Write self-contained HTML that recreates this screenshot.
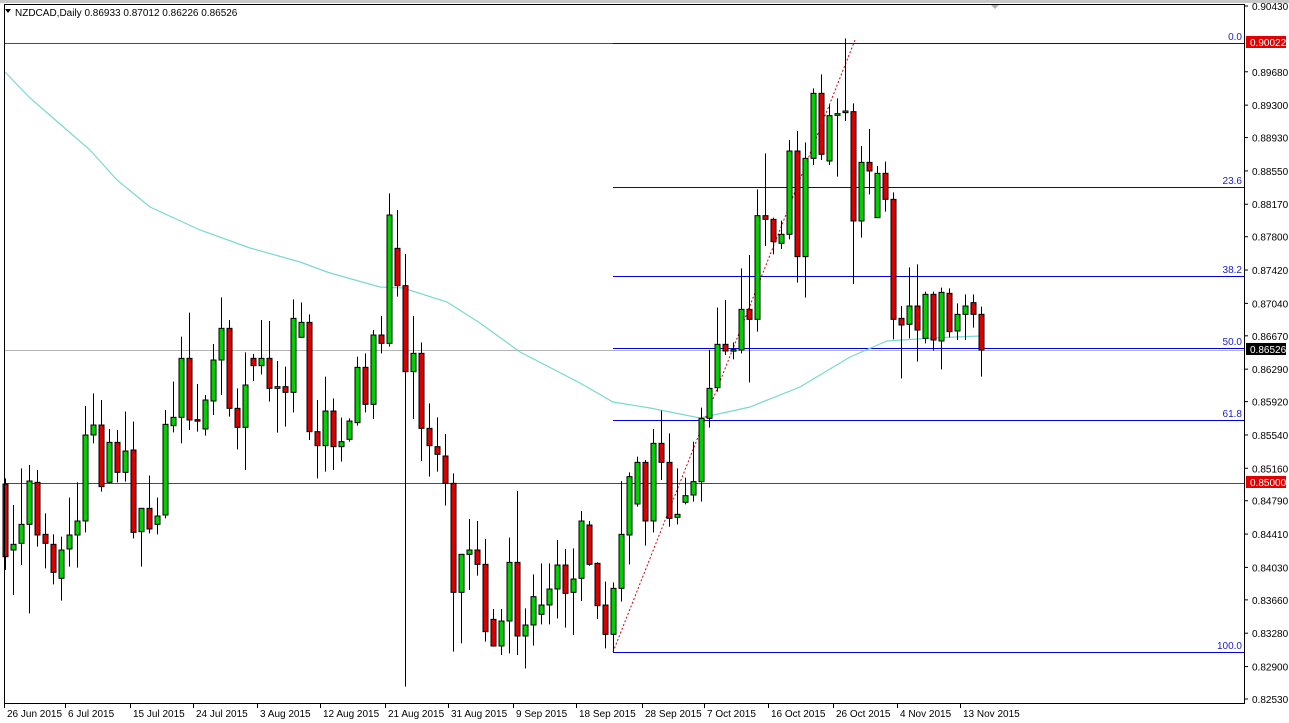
<!DOCTYPE html>
<html><head><meta charset="utf-8"><style>
html,body{margin:0;padding:0;background:#fff;}
body{width:1289px;height:723px;overflow:hidden;position:relative;font-family:"Liberation Sans",sans-serif;}
svg{position:absolute;left:0;top:0;}
text{font-family:"Liberation Sans",sans-serif;font-size:10px;}
</style></head><body>
<svg id="s" width="1289" height="723" xmlns="http://www.w3.org/2000/svg">
<rect x="0" y="0" width="1289" height="723" fill="#fff"/>
<g id="grid"></g>
<g id="cand"></g>
<g id="ax"></g>
</svg>
<script>
var NS="http://www.w3.org/2000/svg";
function el(parent,tag,attrs,txt){var e=document.createElementNS(NS,tag);for(var k in attrs)e.setAttribute(k,attrs[k]);if(txt!==undefined)e.textContent=txt;document.getElementById(parent).appendChild(e);return e;}
el('grid','rect',{x:5,y:43,width:608,height:1,fill:'#ff0000'});
el('grid','rect',{x:5,y:350,width:1239,height:1,fill:'#b4b4b4'});
el('grid','rect',{x:5,y:483,width:1239,height:1,fill:'#ff0000'});
var fib=[[43,'0.0'],[187,'23.6'],[276,'38.2'],[348,'50.0'],[420,'61.8'],[652,'100.0']];
fib.forEach(function(f){el('grid','rect',{x:613,y:f[0],width:631,height:1,fill:'#0000e0'});
el('grid','text',{x:1242,y:f[0]-3,'text-anchor':'end',fill:'#2020c0'},f[1]);});
var ma=[[5,72],[30,98],[60,124],[90,150],[117,180],[150,207],[200,230],[250,248],[300,262],[330,273],[380,287],[403,288],[447,302],[480,323],[520,352],[580,383],[613,402],[650,408],[700,418],[750,407],[800,387],[850,357],[887,341],[933,338],[980,336]];
el('grid','polyline',{points:ma.map(function(p){return p.join(',')}).join(' '),fill:'none',stroke:'#7ad8d0','stroke-width':1.2});
el('grid','line',{x1:613,y1:652,x2:855,y2:40,stroke:'#d00000','stroke-width':1,'stroke-dasharray':'2,2'});
var z1=[[895,912,1130,1170,'r'],[975,1093,1110,1245,'g'],[865,1033,1090,1155,'g'],[855,903,1033,1300,'g'],[870,907,1065,1100,'r'],[1000,1063,1090,1165,'r'],[1063,1093,1177,1213,'r'],[1070,1110,1195,1262,'g'],[953,1065,1107,1160,'g'],[907,1023,1065,1163,'g'],[678,765,1023,1057,'g'],[640,735,765,790,'g'],[660,735,920,935,'r'],[747,787,907,910,'g'],[750,787,877,907,'r'],[695,813,877,905,'g'],[725,810,1057,1075,'r'],[985,985,1055,1160,'g'],[887,985,1047,1060,'r'],[953,1008,1033,1063,'g'],[690,733,1005,1015,'g'],[605,712,737,757,'g'],[470,535,712,790,'g'],[398,535,720,750,'r'],[612,719,722,755,'r'],[645,660,747,767,'g'],[492,540,663,705,'g'],[352,445,540,645,'g'],[420,445,685,710,'r'],[625,685,742,808,'r'],[517,615,742,870,'g'],[522,535,557,603,'r'],[420,535,557,583,'g'],[423,535,625,665,'r'],[543,620,625,758,'g'],[560,620,637,740,'r'],[358,415,637,697,'g'],[367,427,472,472,'g'],[403,427,755,780,'r'],[660,755,797,895,'r']];
var z2=[[590,693,797,875,'g'],[655,693,800,870,'r'],[713,785,800,845,'g'],[715,723,778,785,'g'],[530,562,728,737,'g'],[520,562,673,697,'r'],[450,465,673,717,'g'],[408,465,490,520,'r'],[40,105,490,500,'g'],[90,205,317,350,'r'],[222,317,575,1520,'r'],[408,520,575,717,'g'],[487,520,745,843,'r'],[670,745,797,890,'r'],[712,800,823,875,'r'],[762,828,910,977,'r'],[880,910,1237,1415,'r'],[1123,1123,1237,1390,'g'],[1017,1110,1123,1230,'g'],[1023,1110,1153,1187,'r'],[1077,1153,1355,1385,'r'],[1287,1318,1398,1400,'r'],[1287,1323,1398,1425,'g'],[1073,1147,1323,1420,'g'],[933,1147,1368,1425,'r'],[1285,1335,1368,1465,'g'],[1183,1250,1335,1397,'g'],[1150,1275,1303,1333,'g'],[1150,1227,1275,1333,'g'],[1080,1155,1227,1315,'g'],[1107,1155,1240,1343,'r'],[1105,1197,1237,1365,'g'],[993,1023,1195,1263,'g'],[1023,1035,1153,1157,'r'],[1147,1150,1277,1317,'r'],[1205,1275,1363,1405,'r'],[1207,1225,1363,1415,'g'],[903,1063,1225,1265,'g'],[877,890,1065,1153,'g'],[830,847,972,980,'g'],[840,847,1023,1097,'r']];
var z3=[[1197,1240,1473,1507,'g'],[1142,1240,1297,1350,'r'],[1210,1297,1465,1490,'r'],[1315,1453,1462,1483,'g'],[1343,1397,1417,1423,'g'],[1235,1355,1395,1415,'g'],[1133,1165,1355,1415,'g'],[960,1075,1165,1193,'g'],[833,943,1073,1085,'g'],[810,943,963,975,'r'],[937,959,963,988,'g'],[715,838,960,970,'g'],[675,838,868,1057,'r'],[478,557,868,905,'g'],[370,557,568,648,'r'],[563,568,635,673,'r'],[572,613,640,657,'g'],[330,363,613,628,'g'],[303,363,680,758,'r'],[337,385,680,803,'g'],[175,190,385,405,'g'],[133,190,373,390,'r'],[225,257,393,405,'g'],[205,251,256,440,'g'],[25,243,248,273,'g'],[220,245,573,762,'r'],[348,397,573,623,'g'],[297,397,423,493,'r'],[408,430,563,563,'g'],[395,430,508,545,'r'],[487,508,868,928,'r'],[828,865,885,1045,'r'],[712,828,883,925,'g'],[703,828,900,995,'r'],[785,793,925,940,'g'],[785,793,930,962,'r'],[773,787,933,1018,'g'],[775,790,905,922,'r'],[820,853,903,930,'g'],[793,828,853,930,'g'],[793,818,853,893,'r'],[830,853,960,1040,'r']];
function draw(arr,start,yoff){arr.forEach(function(c,i){var cx=5+8*(start+i)+0.5;var h=yoff+c[0]/3,t=yoff+c[1]/3,b=yoff+c[2]/3,l=yoff+c[3]/3;
el('cand','line',{x1:cx,y1:h,x2:cx,y2:l,stroke:'#000','stroke-width':1});
var bh=Math.max(b-t,1.5);
el('cand','rect',{x:cx-2.5,y:t,width:5,height:bh,fill:c[4]=='g'?'#00d000':'#d80000',stroke:'#000','stroke-width':1});});}
draw(z1,0,180);draw(z2,40,180);draw(z3,81,30);
el('ax','rect',{x:4.5,y:4.5,width:1240,height:699,fill:'none',stroke:'#000','stroke-width':1});
el('ax','rect',{x:0,y:0,width:1289,height:3,fill:'#c8c8c8'});
el('ax','path',{d:'M991 5 L999 5 L995 9 Z',fill:'#b0b0b0'});
var pr=['0.90430','0.89680','0.89300','0.88930','0.88550','0.88170','0.87800','0.87420','0.87040','0.86670','0.86290','0.85920','0.85540','0.85160','0.84790','0.84410','0.84030','0.83660','0.83280','0.82900','0.82530'];
pr.forEach(function(p){var y=6+(0.9043-parseFloat(p))*8772;
el('ax','line',{x1:1244,y1:y,x2:1248,y2:y,stroke:'#000'});
el('ax','text',{x:1252,y:y+4,fill:'#000'},p);});
function tag(y,txt,bg,fg){el('ax','rect',{x:1246,y:y-6,width:40,height:12,fill:bg});el('ax','text',{x:1250,y:y+4,fill:fg},txt);}
tag(42,'0.90022','#e00000','#fff');tag(349,'0.86526','#000','#fff');tag(482,'0.85000','#e00000','#fff');
var ds=[[7,'26 Jun 2015'],[68,'6 Jul 2015'],[133,'15 Jul 2015'],[196,'24 Jul 2015'],[260,'3 Aug 2015'],[323,'12 Aug 2015'],[388,'21 Aug 2015'],[451,'31 Aug 2015'],[516,'9 Sep 2015'],[579,'18 Sep 2015'],[645,'28 Sep 2015'],[707,'7 Oct 2015'],[771,'16 Oct 2015'],[836,'26 Oct 2015'],[900,'4 Nov 2015'],[963,'13 Nov 2015']];
ds.forEach(function(d){el('ax','line',{x1:d[0]-2.5,y1:703,x2:d[0]-2.5,y2:708,stroke:'#000'});el('ax','text',{x:d[0],y:717,fill:'#000'},d[1]);});
el('ax','path',{d:'M5 9 L11 9 L8 13 Z',fill:'#000'});
el('ax','text',{x:15,y:16,fill:'#000'},'NZDCAD,Daily  0.86933 0.87012 0.86226 0.86526');
</script>
</body></html>
